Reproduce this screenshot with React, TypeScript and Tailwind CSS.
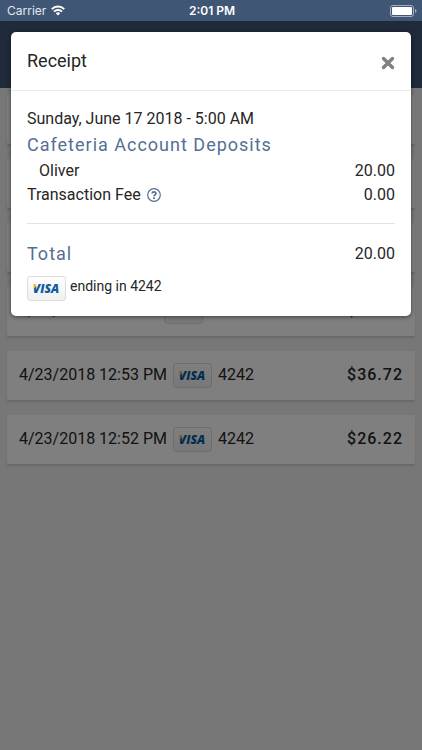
import React from "react";

type Payment = { date: string; last4: string; amount: string };

const payments: Payment[] = [
  { date: "4/24/2018 1:12 PM", last4: "4242", amount: "$20.00" },
  { date: "4/23/2018 12:53 PM", last4: "4242", amount: "$36.72" },
  { date: "4/23/2018 12:52 PM", last4: "4242", amount: "$26.22" },
];

function VisaBadge() {
  return (
    <span className="inline-flex h-[25px] w-[39px] shrink-0 items-center justify-center rounded-[3px] border border-[#dcdcdc] bg-linear-to-b from-white to-[#f0f0f0]">
      <svg viewBox="0 0 35 21" className="h-[21px] w-[35px] overflow-visible" role="img" aria-label="Visa">
        <defs>
          <linearGradient id="visa-ink" gradientUnits="userSpaceOnUse" x1="4" y1="6" x2="10" y2="12">
            <stop offset="0.4" stopColor="#f5b21e" />
            <stop offset="0.5" stopColor="#0e5a9d" />
          </linearGradient>
        </defs>
        <text
          x="17"
          y="15"
          textAnchor="middle"
          fill="url(#visa-ink)"
          className="font-['Open_Sans',sans-serif] text-[12px] font-extrabold italic"
        >
          VISA
        </text>
      </svg>
    </span>
  );
}

function StatusBar() {
  return (
    <div className="grid h-[21px] grid-cols-3 items-center bg-[#3f5674] pr-[5px] pl-[7px] font-['Inter',sans-serif] text-[12px] text-white">
      <div className="flex items-center gap-[5px]">
        <span className="text-[#e3e8ee]">Carrier</span>
        <svg viewBox="0 0 14 11" className="h-[11px] w-[14px]" fill="none" stroke="white" strokeWidth="2" aria-hidden="true">
          <path d="M0.8 4.1a8.8 8.8 0 0 1 12.4 0" />
          <path d="M3 6.6a5.7 5.7 0 0 1 8 0" />
          <path d="M7 10.6 4.8 8.3a3.1 3.1 0 0 1 4.4 0z" fill="white" stroke="none" />
        </svg>
      </div>
      <span className="text-center font-semibold">2:01 PM</span>
      <svg viewBox="0 0 27 12" className="h-[12px] w-[27px] justify-self-end" aria-hidden="true">
        <rect x="0.5" y="0.5" width="23" height="11" rx="2.5" fill="none" stroke="#a3afbf" />
        <rect x="2" y="2" width="20" height="8" rx="1" fill="white" />
        <path d="M25 4v4c2-.7 2-3.300 0-4z" fill="#a3afbf" />
      </svg>
    </div>
  );
}

function PaymentCard({ payment }: { payment?: Payment }) {
  return (
    <li className="flex h-[49px] items-center justify-between rounded-[2px] bg-white px-3 pb-px shadow-[0_2px_2px_rgba(0,0,0,0.12)]">
      {payment && (
        <>
          <div className="flex items-center gap-[6px]">
            <span>{payment.date}</span>
            <span className="pt-[2px] leading-none">
              <VisaBadge />
            </span>
            <span>{payment.last4}</span>
          </div>
          <span className="font-medium tracking-[1px]">{payment.amount}</span>
        </>
      )}
    </li>
  );
}

function ReceiptDialog() {
  return (
    <div
      role="dialog"
      aria-modal="true"
      aria-labelledby="receipt-title"
      className="rounded-[5px] bg-white text-[#262626] shadow-[0_1px_4px_rgba(0,0,0,0.5)]"
    >
      <header className="flex h-[59px] items-center justify-between border-b border-[#e9ecef] px-4">
        <h1 id="receipt-title" className="text-[18px] leading-6">Receipt</h1>
        <button type="button" aria-label="Close" className="pt-1 text-[#7f7f7f]">
          <svg viewBox="0 0 14 14" className="h-[14px] w-[14px]" stroke="currentColor" strokeWidth="3.4" strokeLinecap="round">
            <path d="M2.500 2.500l9 9M11.500 2.500l-9 9" />
          </svg>
        </button>
      </header>
      <div className="px-4 pt-4 pb-[15px]">
        <p className="leading-6">Sunday, June 17 2018 - 5:00 AM</p>
        <h2 className="text-[18px] leading-7 tracking-[1px] text-[#556f94]">Cafeteria Account Deposits</h2>
        <div className="flex justify-between pl-3 leading-6">
          <span>Oliver</span>
          <span>20.00</span>
        </div>
        <div className="flex justify-between leading-6">
          <span className="flex items-center gap-[6px]">
            Transaction Fee
            <button type="button" aria-label="About the transaction fee" className="text-[#556f94]">
              <svg viewBox="0 0 14 14" className="h-[14px] w-[14px]" fill="none" stroke="currentColor" aria-hidden="true">
                <circle cx="7" cy="7" r="6.3" strokeWidth="1.200" />
                <path d="M5 5.500C5.200 3.300 9.100 3.400 9 5.500C8.900 6.800 7.100 6.700 7 8.300" strokeWidth="1.600" />
                <path d="M7 9.200v1.700" strokeWidth="1.800" />
              </svg>
            </button>
          </span>
          <span>0.00</span>
        </div>
        <hr className="mt-4 mb-4 border-[#e3e3e3]" />
        <div className="flex items-center justify-between">
          <h2 className="text-[18px] leading-7 tracking-[1px] text-[#556f94]">Total</h2>
          <span className="leading-6">20.00</span>
        </div>
        <div className="flex gap-1 pt-2">
          <VisaBadge />
          <span className="text-[14px] leading-5">ending in 4242</span>
        </div>
      </div>
    </div>
  );
}

export default function App() {
  return (
    <div className="flex min-h-screen flex-col font-['Roboto',sans-serif] text-[16px] text-[#262626]">
      <StatusBar />
      <div className="relative flex flex-1 flex-col bg-[#eeeeee]">
        <div className="h-[67px] bg-[#3e5474]" />
        <ul className="flex flex-col gap-[15px] px-[7px] pt-[7px]">
          <PaymentCard />
          <PaymentCard />
          <PaymentCard />
          {payments.map((payment) => (
            <PaymentCard key={payment.date} payment={payment} />
          ))}
        </ul>
        <div className="absolute inset-0 bg-black/50 px-[11px] pt-[11px]">
          <ReceiptDialog />
        </div>
      </div>
    </div>
  );
}
